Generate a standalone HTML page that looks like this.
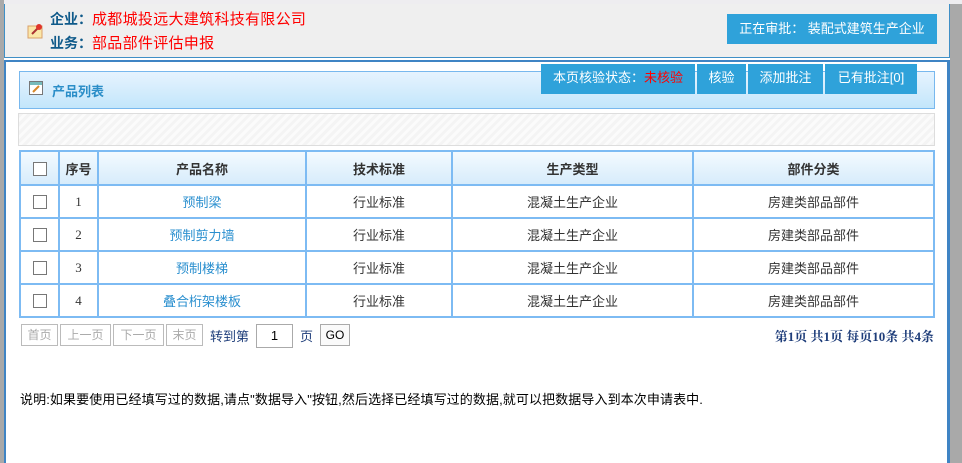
<!DOCTYPE html>
<html><head><meta charset="utf-8"><style>
*{margin:0;padding:0;box-sizing:border-box}
body{width:962px;height:463px;overflow:hidden;background:#fff;position:relative;font-family:"Liberation Sans","Noto Sans CJK SC",sans-serif;font-size:12px;color:#333}
.abs{position:absolute}
.btn{position:absolute;background:#2fa2da;color:#fff;font-size:13px;text-align:center}
table{border-collapse:collapse;position:absolute;left:19px;top:150px;width:916px}
td,th{border:2px solid #7dbbf3;text-align:center;height:33px;font-size:13px;font-weight:normal}
th{height:34px;background:linear-gradient(#f3faff,#d7ecfb);font-weight:bold;font-size:13px;color:#333}
.cb{display:inline-block;width:14px;height:14px;border:1px solid #777;background:#fff;vertical-align:middle}
.lk{color:#2a8fcf}
.pg{position:absolute;top:324px;height:22px;border:1px solid #bbb;color:#aaa;font-size:12px;line-height:20px;text-align:center}
</style></head><body>
<div class="abs" style="left:0;top:0;width:962px;height:4px;background:#eeedf0"></div>
<div class="abs" style="left:0;top:0;width:4px;height:463px;background:#a9a9a9"></div>
<div class="abs" style="left:950px;top:4px;width:12px;height:459px;background:#a9a9a9"></div>
<div class="abs" style="left:4px;top:4px;width:946px;height:54px;background:#efefef;border-left:1px solid #3f8fc6;border-right:1px solid #3f8fc6;border-bottom:1px solid #3f8fc6"></div>
<svg class="abs" style="left:27px;top:22px" width="18" height="18" viewBox="0 0 18 18"><rect x="1" y="4" width="14" height="12" fill="#fbe7a8" stroke="#d8a16a"/><path d="M5 12 L11 6" stroke="#a33" stroke-width="2"/><circle cx="12" cy="5" r="3" fill="#e0352b"/></svg>
<div class="abs" style="left:50px;top:8px;font-size:14px;color:#0f5a8a;font-weight:bold">企业：<span style="color:#f00;font-weight:normal;font-size:15px;letter-spacing:0.3px">成都城投远大建筑科技有限公司</span></div>
<div class="abs" style="left:50px;top:32px;font-size:14px;color:#0f5a8a;font-weight:bold">业务：<span style="color:#f00;font-weight:normal;font-size:15px;letter-spacing:0.3px">部品部件评估申报</span></div>
<div class="btn" style="left:727px;top:14px;width:210px;height:30px;line-height:30px">正在审批： 装配式建筑生产企业</div>
<div class="abs" style="left:4px;top:60px;width:946px;height:403px;border:2px solid #3f84c4;border-bottom:none;border-right:3px solid #3f84c4"></div>
<div class="abs" style="left:19px;top:71px;width:916px;height:38px;border:1px solid #78b8ee;background:linear-gradient(#e6f3fe,#c3e6fb)"></div>
<svg class="abs" style="left:29px;top:81px" width="15" height="15"><rect x="0.5" y="0.5" width="13" height="13" fill="#fff" stroke="#777"/><rect x="1" y="1" width="12" height="3" fill="#7bb"/><path d="M4 11 L10 5" stroke="#d8882a" stroke-width="2"/></svg>
<div class="abs" style="left:52px;top:81px;font-size:13px;font-weight:bold;color:#2b8ec8">产品列表</div>
<div class="btn" style="left:541px;top:64px;width:154px;height:30px;line-height:28px">本页核验状态：<span style="color:#f00">未核验</span></div>
<div class="btn" style="left:697px;top:64px;width:49px;height:30px;line-height:28px">核验</div>
<div class="btn" style="left:748px;top:64px;width:75px;height:30px;line-height:28px">添加批注</div>
<div class="btn" style="left:825px;top:64px;width:92px;height:30px;line-height:28px">已有批注[0]</div>
<div class="abs" style="left:18px;top:113px;width:917px;height:33px;border:1px solid #ddd;background:repeating-linear-gradient(135deg,#f4f4f4 0 3px,#fbfbfb 3px 6px)"></div>
<table>
<tr><th style="width:39px"><span class="cb"></span></th><th style="width:39px">序号</th><th style="width:208px">产品名称</th><th style="width:146px">技术标准</th><th style="width:241px">生产类型</th><th>部件分类</th></tr>
<tr><td><span class="cb"></span></td><td style="font-family:'Liberation Serif',serif">1</td><td class="lk">预制梁</td><td>行业标准</td><td>混凝土生产企业</td><td>房建类部品部件</td></tr>
<tr><td><span class="cb"></span></td><td style="font-family:'Liberation Serif',serif">2</td><td class="lk">预制剪力墙</td><td>行业标准</td><td>混凝土生产企业</td><td>房建类部品部件</td></tr>
<tr><td><span class="cb"></span></td><td style="font-family:'Liberation Serif',serif">3</td><td class="lk">预制楼梯</td><td>行业标准</td><td>混凝土生产企业</td><td>房建类部品部件</td></tr>
<tr><td><span class="cb"></span></td><td style="font-family:'Liberation Serif',serif">4</td><td class="lk">叠合桁架楼板</td><td>行业标准</td><td>混凝土生产企业</td><td>房建类部品部件</td></tr>
</table>
<div class="pg" style="left:21px;width:37px">首页</div>
<div class="pg" style="left:60px;width:51px">上一页</div>
<div class="pg" style="left:113px;width:51px">下一页</div>
<div class="pg" style="left:166px;width:37px">末页</div>
<div class="abs" style="left:210px;top:326px;font-size:13px;color:#1e3d7a">转到第</div>
<div class="abs" style="left:256px;top:324px;width:37px;height:24px;border:1px solid #aaa;text-align:center;line-height:22px;font-size:13px;color:#000">1</div>
<div class="abs" style="left:300px;top:326px;font-size:13px;color:#1e3d7a">页</div>
<div class="abs" style="left:320px;top:324px;width:30px;height:22px;border:1px solid #aaa;background:#fafafa;text-align:center;line-height:20px;font-size:12px;color:#000">GO</div>
<div class="abs" style="right:28px;top:326px;font-size:13px;font-weight:bold;color:#1e3d7a;font-family:'Liberation Serif','Noto Serif CJK SC',serif">第1页 共1页 每页10条 共4条</div>
<div class="abs" style="left:20px;top:389px;font-size:13px;color:#000;letter-spacing:0.1px">说明:如果要使用已经填写过的数据,请点"数据导入"按钮,然后选择已经填写过的数据,就可以把数据导入到本次申请表中.</div>
</body></html>
